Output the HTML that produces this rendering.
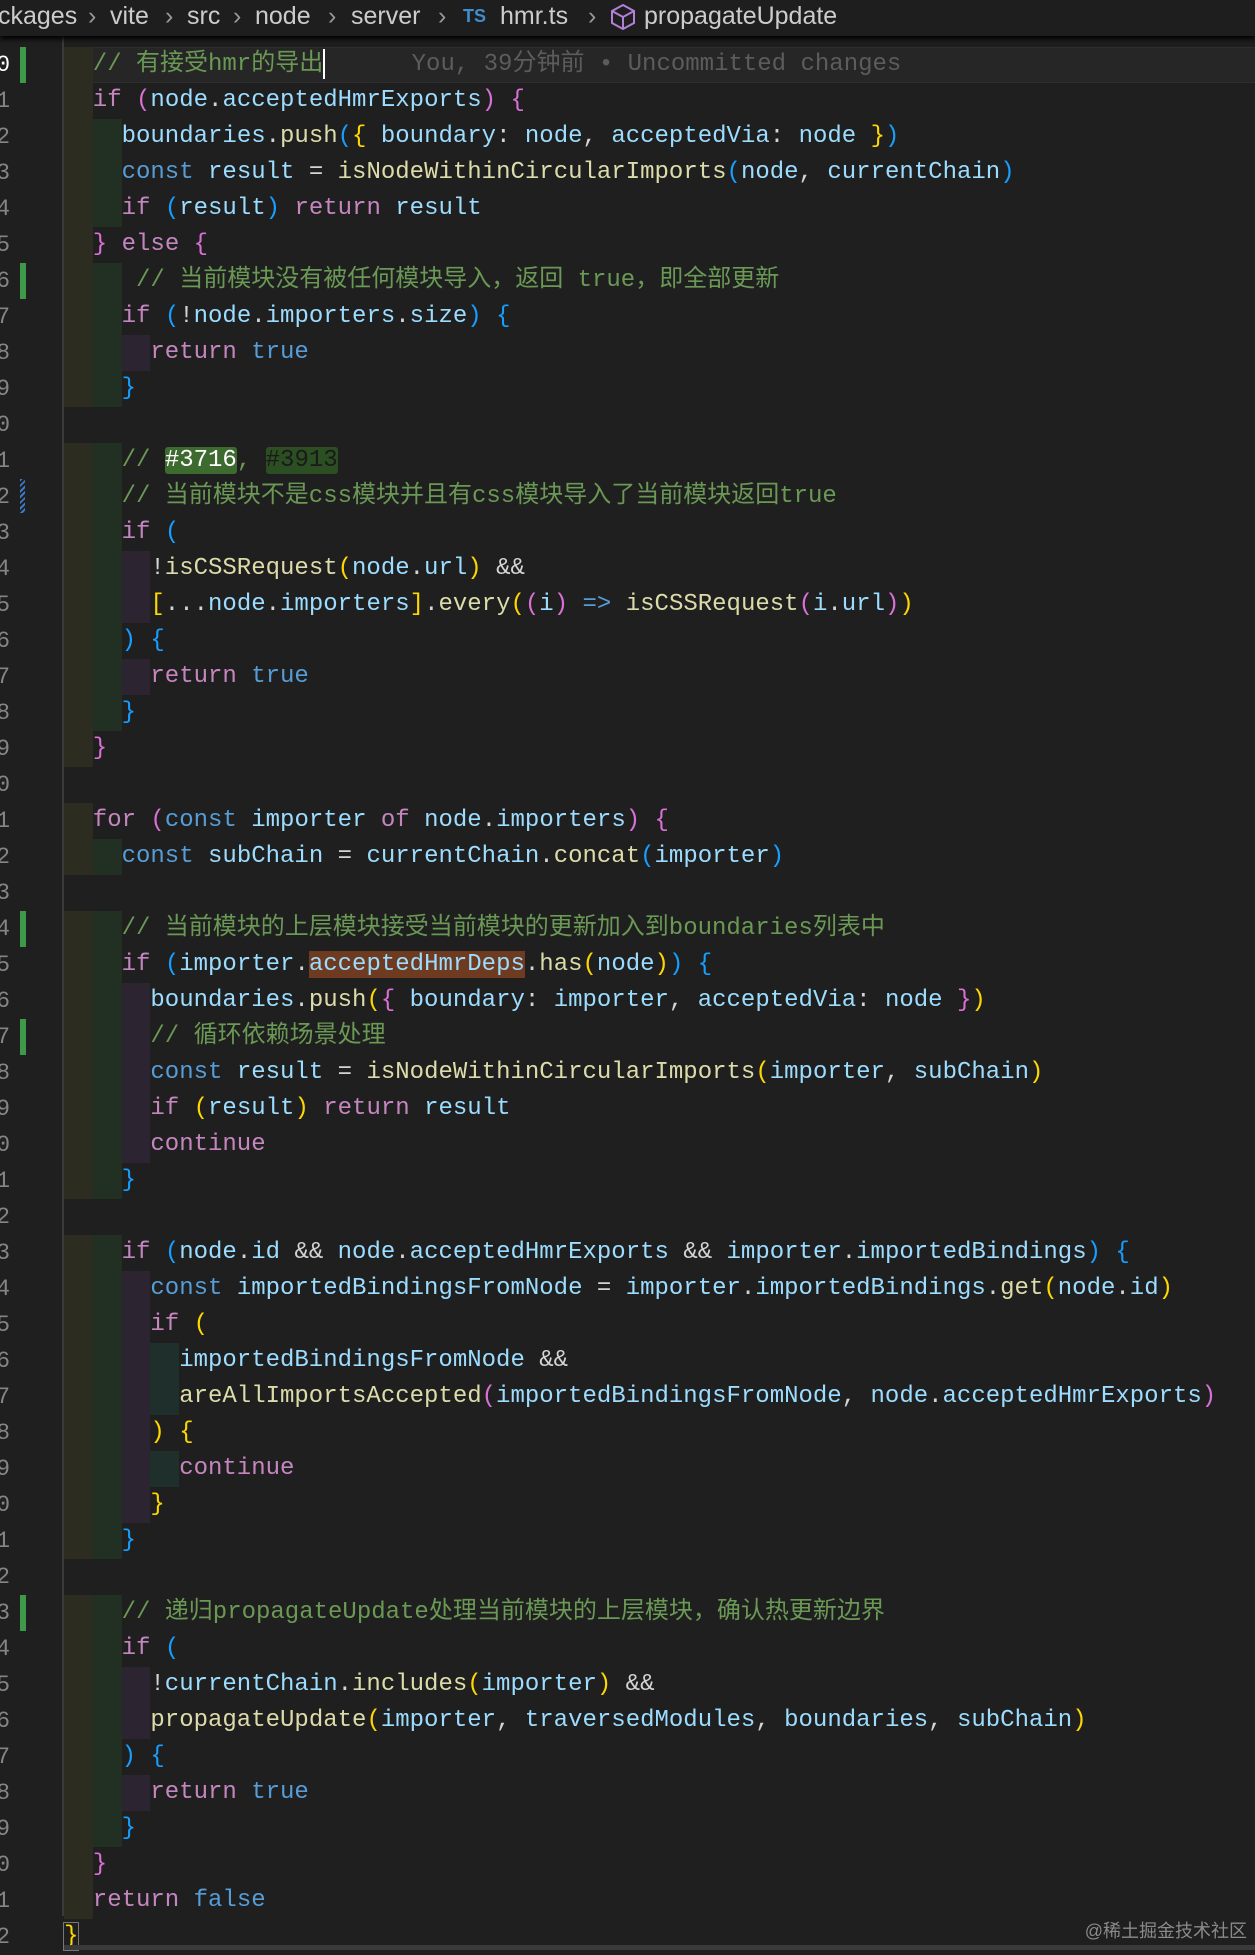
<!DOCTYPE html>
<html><head><meta charset="utf-8">
<style>
html,body{margin:0;padding:0;}
body{width:1255px;height:1950px;background:#1f1f1f;position:relative;overflow:hidden;font-family:"Liberation Mono","Noto Sans CJK SC",monospace;}
.bc{position:absolute;left:0;top:0;width:1255px;height:36px;background:#1e1e1e;box-shadow:0 3px 5px #000;z-index:5;font-family:"Liberation Sans","Noto Sans CJK SC",sans-serif;font-size:25px;color:#cccccc;white-space:nowrap;line-height:32px;}
.bc span{position:absolute;top:0;}
.bc .sep{color:#999;}
.ln{position:absolute;left:-8px;width:18px;overflow:hidden;text-align:right;font-size:23px;color:#858585;height:36px;line-height:36px;direction:rtl;margin-top:3px;}
.l{position:absolute;left:64px;height:36px;line-height:36px;font-size:24px;white-space:pre;color:#d4d4d4;margin-top:3px;}
.i{display:inline-block;width:28.8px;height:36px;vertical-align:top;}
.a{background:#2c2c20}.b{background:#223024}.p{background:#2d2431}.t{background:#1f2f2b}
.k{color:#c586c0}.c{color:#569cd6}.v{color:#9cdcfe}.f{color:#dcdcaa}.cm{color:#6a9955}
.y{color:#ffd700}.m{color:#da70d6}.u{color:#179fff}
.gb{position:absolute;left:20px;width:6px;background:#3e9a4a;margin-top:3px;}
.guide{position:absolute;left:62px;top:36px;width:2px;height:1880px;background:#3a3a3a;}
</style></head><body>
<div class="bc">
<span style="left:-2px">ckages</span><span class="sep" style="left:88px">›</span>
<span style="left:110px">vite</span><span class="sep" style="left:165px">›</span>
<span style="left:187px">src</span><span class="sep" style="left:233px">›</span>
<span style="left:255px">node</span><span class="sep" style="left:328px">›</span>
<span style="left:351px">server</span><span class="sep" style="left:438px">›</span>
<span style="left:463px;color:#3f8fd0;font-size:18px;font-weight:bold">TS</span>
<span style="left:500px">hmr.ts</span><span class="sep" style="left:588px">›</span>
<span style="left:610px;top:3px"><svg width="26" height="28" viewBox="0 0 26 28"><path d="M13 2 L24 8 L24 20 L13 26 L2 20 L2 8 Z M2 8 L13 14 L24 8 M13 14 L13 26" fill="none" stroke="#b180d7" stroke-width="2"/></svg></span>
<span style="left:644px">propagateUpdate</span>
</div>
<div class="guide"></div>
<div style="position:absolute;left:64px;top:47px;width:1191px;height:36px;background:#262626;border-top:1px solid #2e2e2e;border-bottom:1px solid #2e2e2e;box-sizing:border-box"></div>
<div class="gb" style="top:44px;height:36px"></div>
<div class="gb" style="top:260px;height:36px"></div>
<div class="gb" style="top:908px;height:36px"></div>
<div class="gb" style="top:1016px;height:36px"></div>
<div class="gb" style="top:1592px;height:36px"></div>
<div style="position:absolute;left:20px;top:479px;width:5px;height:34px;background:repeating-linear-gradient(135deg,#3a78c8 0 2px,#1f1f1f 2px 4px)"></div>

<div class="ln" style="top:44px;color:#fff">0</div><div class="ln" style="top:80px">1</div><div class="ln" style="top:116px">2</div><div class="ln" style="top:152px">3</div><div class="ln" style="top:188px">4</div><div class="ln" style="top:224px">5</div><div class="ln" style="top:260px">6</div><div class="ln" style="top:296px">7</div><div class="ln" style="top:332px">8</div><div class="ln" style="top:368px">9</div><div class="ln" style="top:404px">0</div><div class="ln" style="top:440px">1</div><div class="ln" style="top:476px">2</div><div class="ln" style="top:512px">3</div><div class="ln" style="top:548px">4</div><div class="ln" style="top:584px">5</div><div class="ln" style="top:620px">6</div><div class="ln" style="top:656px">7</div><div class="ln" style="top:692px">8</div><div class="ln" style="top:728px">9</div><div class="ln" style="top:764px">0</div><div class="ln" style="top:800px">1</div><div class="ln" style="top:836px">2</div><div class="ln" style="top:872px">3</div><div class="ln" style="top:908px">4</div><div class="ln" style="top:944px">5</div><div class="ln" style="top:980px">6</div><div class="ln" style="top:1016px">7</div><div class="ln" style="top:1052px">8</div><div class="ln" style="top:1088px">9</div><div class="ln" style="top:1124px">0</div><div class="ln" style="top:1160px">1</div><div class="ln" style="top:1196px">2</div><div class="ln" style="top:1232px">3</div><div class="ln" style="top:1268px">4</div><div class="ln" style="top:1304px">5</div><div class="ln" style="top:1340px">6</div><div class="ln" style="top:1376px">7</div><div class="ln" style="top:1412px">8</div><div class="ln" style="top:1448px">9</div><div class="ln" style="top:1484px">0</div><div class="ln" style="top:1520px">1</div><div class="ln" style="top:1556px">2</div><div class="ln" style="top:1592px">3</div><div class="ln" style="top:1628px">4</div><div class="ln" style="top:1664px">5</div><div class="ln" style="top:1700px">6</div><div class="ln" style="top:1736px">7</div><div class="ln" style="top:1772px">8</div><div class="ln" style="top:1808px">9</div><div class="ln" style="top:1844px">0</div><div class="ln" style="top:1880px">1</div><div class="ln" style="top:1916px">2</div>

<div class="l" style="top:44px"><span class="i a"></span><span class="cm">// 有接受hmr的导出</span><span style="display:inline-block;width:2px;height:30px;background:#fff;vertical-align:middle"></span><span style="color:#5c5c5c">      You, 39分钟前 • Uncommitted changes</span></div>
<div class="l" style="top:80px"><span class="i a"></span><span class="k">if</span> <span class="m">(</span><span class="v">node</span>.<span class="v">acceptedHmrExports</span><span class="m">)</span> <span class="m">{</span></div>
<div class="l" style="top:116px"><span class="i a"></span><span class="i b"></span><span class="v">boundaries</span>.<span class="f">push</span><span class="u">(</span><span class="y">{</span> <span class="v">boundary</span>: <span class="v">node</span>, <span class="v">acceptedVia</span>: <span class="v">node</span> <span class="y">}</span><span class="u">)</span></div>
<div class="l" style="top:152px"><span class="i a"></span><span class="i b"></span><span class="c">const</span> <span class="v">result</span> = <span class="f">isNodeWithinCircularImports</span><span class="u">(</span><span class="v">node</span>, <span class="v">currentChain</span><span class="u">)</span></div>
<div class="l" style="top:188px"><span class="i a"></span><span class="i b"></span><span class="k">if</span> <span class="u">(</span><span class="v">result</span><span class="u">)</span> <span class="k">return</span> <span class="v">result</span></div>
<div class="l" style="top:224px"><span class="i a"></span><span class="m">}</span> <span class="k">else</span> <span class="m">{</span></div>
<div class="l" style="top:260px"><span class="i a"></span><span class="i b"></span><span class="cm"> // 当前模块没有被任何模块导入，返回 true，即全部更新</span></div>
<div class="l" style="top:296px"><span class="i a"></span><span class="i b"></span><span class="k">if</span> <span class="u">(</span>!<span class="v">node</span>.<span class="v">importers</span>.<span class="v">size</span><span class="u">)</span> <span class="u">{</span></div>
<div class="l" style="top:332px"><span class="i a"></span><span class="i b"></span><span class="i p"></span><span class="k">return</span> <span class="c">true</span></div>
<div class="l" style="top:368px"><span class="i a"></span><span class="i b"></span><span class="u">}</span></div>
<div class="l" style="top:440px"><span class="i a"></span><span class="i b"></span><span class="cm">// </span><span style="background:#3d6a2e;color:#fff;border-radius:3px">#3716</span><span class="cm">, </span><span style="background:#2b4e22;color:#1a1a1a;border-radius:3px">#3913</span></div>
<div class="l" style="top:476px"><span class="i a"></span><span class="i b"></span><span class="cm">// 当前模块不是css模块并且有css模块导入了当前模块返回true</span></div>
<div class="l" style="top:512px"><span class="i a"></span><span class="i b"></span><span class="k">if</span> <span class="u">(</span></div>
<div class="l" style="top:548px"><span class="i a"></span><span class="i b"></span><span class="i p"></span>!<span class="f">isCSSRequest</span><span class="y">(</span><span class="v">node</span>.<span class="v">url</span><span class="y">)</span> &amp;&amp;</div>
<div class="l" style="top:584px"><span class="i a"></span><span class="i b"></span><span class="i p"></span><span class="y">[</span>...<span class="v">node</span>.<span class="v">importers</span><span class="y">]</span>.<span class="f">every</span><span class="y">(</span><span class="m">(</span><span class="v">i</span><span class="m">)</span> <span class="c">=&gt;</span> <span class="f">isCSSRequest</span><span class="m">(</span><span class="v">i</span>.<span class="v">url</span><span class="m">)</span><span class="y">)</span></div>
<div class="l" style="top:620px"><span class="i a"></span><span class="i b"></span><span class="u">)</span> <span class="u">{</span></div>
<div class="l" style="top:656px"><span class="i a"></span><span class="i b"></span><span class="i p"></span><span class="k">return</span> <span class="c">true</span></div>
<div class="l" style="top:692px"><span class="i a"></span><span class="i b"></span><span class="u">}</span></div>
<div class="l" style="top:728px"><span class="i a"></span><span class="m">}</span></div>
<div class="l" style="top:800px"><span class="i a"></span><span class="k">for</span> <span class="m">(</span><span class="c">const</span> <span class="v">importer</span> <span class="k">of</span> <span class="v">node</span>.<span class="v">importers</span><span class="m">)</span> <span class="m">{</span></div>
<div class="l" style="top:836px"><span class="i a"></span><span class="i b"></span><span class="c">const</span> <span class="v">subChain</span> = <span class="v">currentChain</span>.<span class="f">concat</span><span class="u">(</span><span class="v">importer</span><span class="u">)</span></div>
<div class="l" style="top:908px"><span class="i a"></span><span class="i b"></span><span class="cm">// 当前模块的上层模块接受当前模块的更新加入到boundaries列表中</span></div>
<div class="l" style="top:944px"><span class="i a"></span><span class="i b"></span><span class="k">if</span> <span class="u">(</span><span class="v">importer</span>.<span class="v" style="background:#6e3a20">acceptedHmrDeps</span>.<span class="f">has</span><span class="y">(</span><span class="v">node</span><span class="y">)</span><span class="u">)</span> <span class="u">{</span></div>
<div class="l" style="top:980px"><span class="i a"></span><span class="i b"></span><span class="i p"></span><span class="v">boundaries</span>.<span class="f">push</span><span class="y">(</span><span class="m">{</span> <span class="v">boundary</span>: <span class="v">importer</span>, <span class="v">acceptedVia</span>: <span class="v">node</span> <span class="m">}</span><span class="y">)</span></div>
<div class="l" style="top:1016px"><span class="i a"></span><span class="i b"></span><span class="i p"></span><span class="cm">// 循环依赖场景处理</span></div>
<div class="l" style="top:1052px"><span class="i a"></span><span class="i b"></span><span class="i p"></span><span class="c">const</span> <span class="v">result</span> = <span class="f">isNodeWithinCircularImports</span><span class="y">(</span><span class="v">importer</span>, <span class="v">subChain</span><span class="y">)</span></div>
<div class="l" style="top:1088px"><span class="i a"></span><span class="i b"></span><span class="i p"></span><span class="k">if</span> <span class="y">(</span><span class="v">result</span><span class="y">)</span> <span class="k">return</span> <span class="v">result</span></div>
<div class="l" style="top:1124px"><span class="i a"></span><span class="i b"></span><span class="i p"></span><span class="k">continue</span></div>
<div class="l" style="top:1160px"><span class="i a"></span><span class="i b"></span><span class="u">}</span></div>
<div class="l" style="top:1232px"><span class="i a"></span><span class="i b"></span><span class="k">if</span> <span class="u">(</span><span class="v">node</span>.<span class="v">id</span> &amp;&amp; <span class="v">node</span>.<span class="v">acceptedHmrExports</span> &amp;&amp; <span class="v">importer</span>.<span class="v">importedBindings</span><span class="u">)</span> <span class="u">{</span></div>
<div class="l" style="top:1268px"><span class="i a"></span><span class="i b"></span><span class="i p"></span><span class="c">const</span> <span class="v">importedBindingsFromNode</span> = <span class="v">importer</span>.<span class="v">importedBindings</span>.<span class="f">get</span><span class="y">(</span><span class="v">node</span>.<span class="v">id</span><span class="y">)</span></div>
<div class="l" style="top:1304px"><span class="i a"></span><span class="i b"></span><span class="i p"></span><span class="k">if</span> <span class="y">(</span></div>
<div class="l" style="top:1340px"><span class="i a"></span><span class="i b"></span><span class="i p"></span><span class="i t"></span><span class="v">importedBindingsFromNode</span> &amp;&amp;</div>
<div class="l" style="top:1376px"><span class="i a"></span><span class="i b"></span><span class="i p"></span><span class="i t"></span><span class="f">areAllImportsAccepted</span><span class="m">(</span><span class="v">importedBindingsFromNode</span>, <span class="v">node</span>.<span class="v">acceptedHmrExports</span><span class="m">)</span></div>
<div class="l" style="top:1412px"><span class="i a"></span><span class="i b"></span><span class="i p"></span><span class="y">)</span> <span class="y">{</span></div>
<div class="l" style="top:1448px"><span class="i a"></span><span class="i b"></span><span class="i p"></span><span class="i t"></span><span class="k">continue</span></div>
<div class="l" style="top:1484px"><span class="i a"></span><span class="i b"></span><span class="i p"></span><span class="y">}</span></div>
<div class="l" style="top:1520px"><span class="i a"></span><span class="i b"></span><span class="u">}</span></div>
<div class="l" style="top:1592px"><span class="i a"></span><span class="i b"></span><span class="cm">// 递归propagateUpdate处理当前模块的上层模块，确认热更新边界</span></div>
<div class="l" style="top:1628px"><span class="i a"></span><span class="i b"></span><span class="k">if</span> <span class="u">(</span></div>
<div class="l" style="top:1664px"><span class="i a"></span><span class="i b"></span><span class="i p"></span>!<span class="v">currentChain</span>.<span class="f">includes</span><span class="y">(</span><span class="v">importer</span><span class="y">)</span> &amp;&amp;</div>
<div class="l" style="top:1700px"><span class="i a"></span><span class="i b"></span><span class="i p"></span><span class="f">propagateUpdate</span><span class="y">(</span><span class="v">importer</span>, <span class="v">traversedModules</span>, <span class="v">boundaries</span>, <span class="v">subChain</span><span class="y">)</span></div>
<div class="l" style="top:1736px"><span class="i a"></span><span class="i b"></span><span class="u">)</span> <span class="u">{</span></div>
<div class="l" style="top:1772px"><span class="i a"></span><span class="i b"></span><span class="i p"></span><span class="k">return</span> <span class="c">true</span></div>
<div class="l" style="top:1808px"><span class="i a"></span><span class="i b"></span><span class="u">}</span></div>
<div class="l" style="top:1844px"><span class="i a"></span><span class="m">}</span></div>
<div class="l" style="top:1880px"><span class="i a"></span><span class="k">return</span> <span class="c">false</span></div>
<div class="l" style="top:1916px"><span class="y" style="outline:1px solid #777">}</span></div>

<div style="position:absolute;left:64px;top:1945px;width:1191px;height:5px;background:#3a3a3a"></div>
<div style="position:absolute;right:8px;top:1916px;font-family:'Liberation Sans','Noto Sans CJK SC',sans-serif;font-size:18px;color:#8a8a8a;line-height:30px">@稀土掘金技术社区</div>
</body></html>
